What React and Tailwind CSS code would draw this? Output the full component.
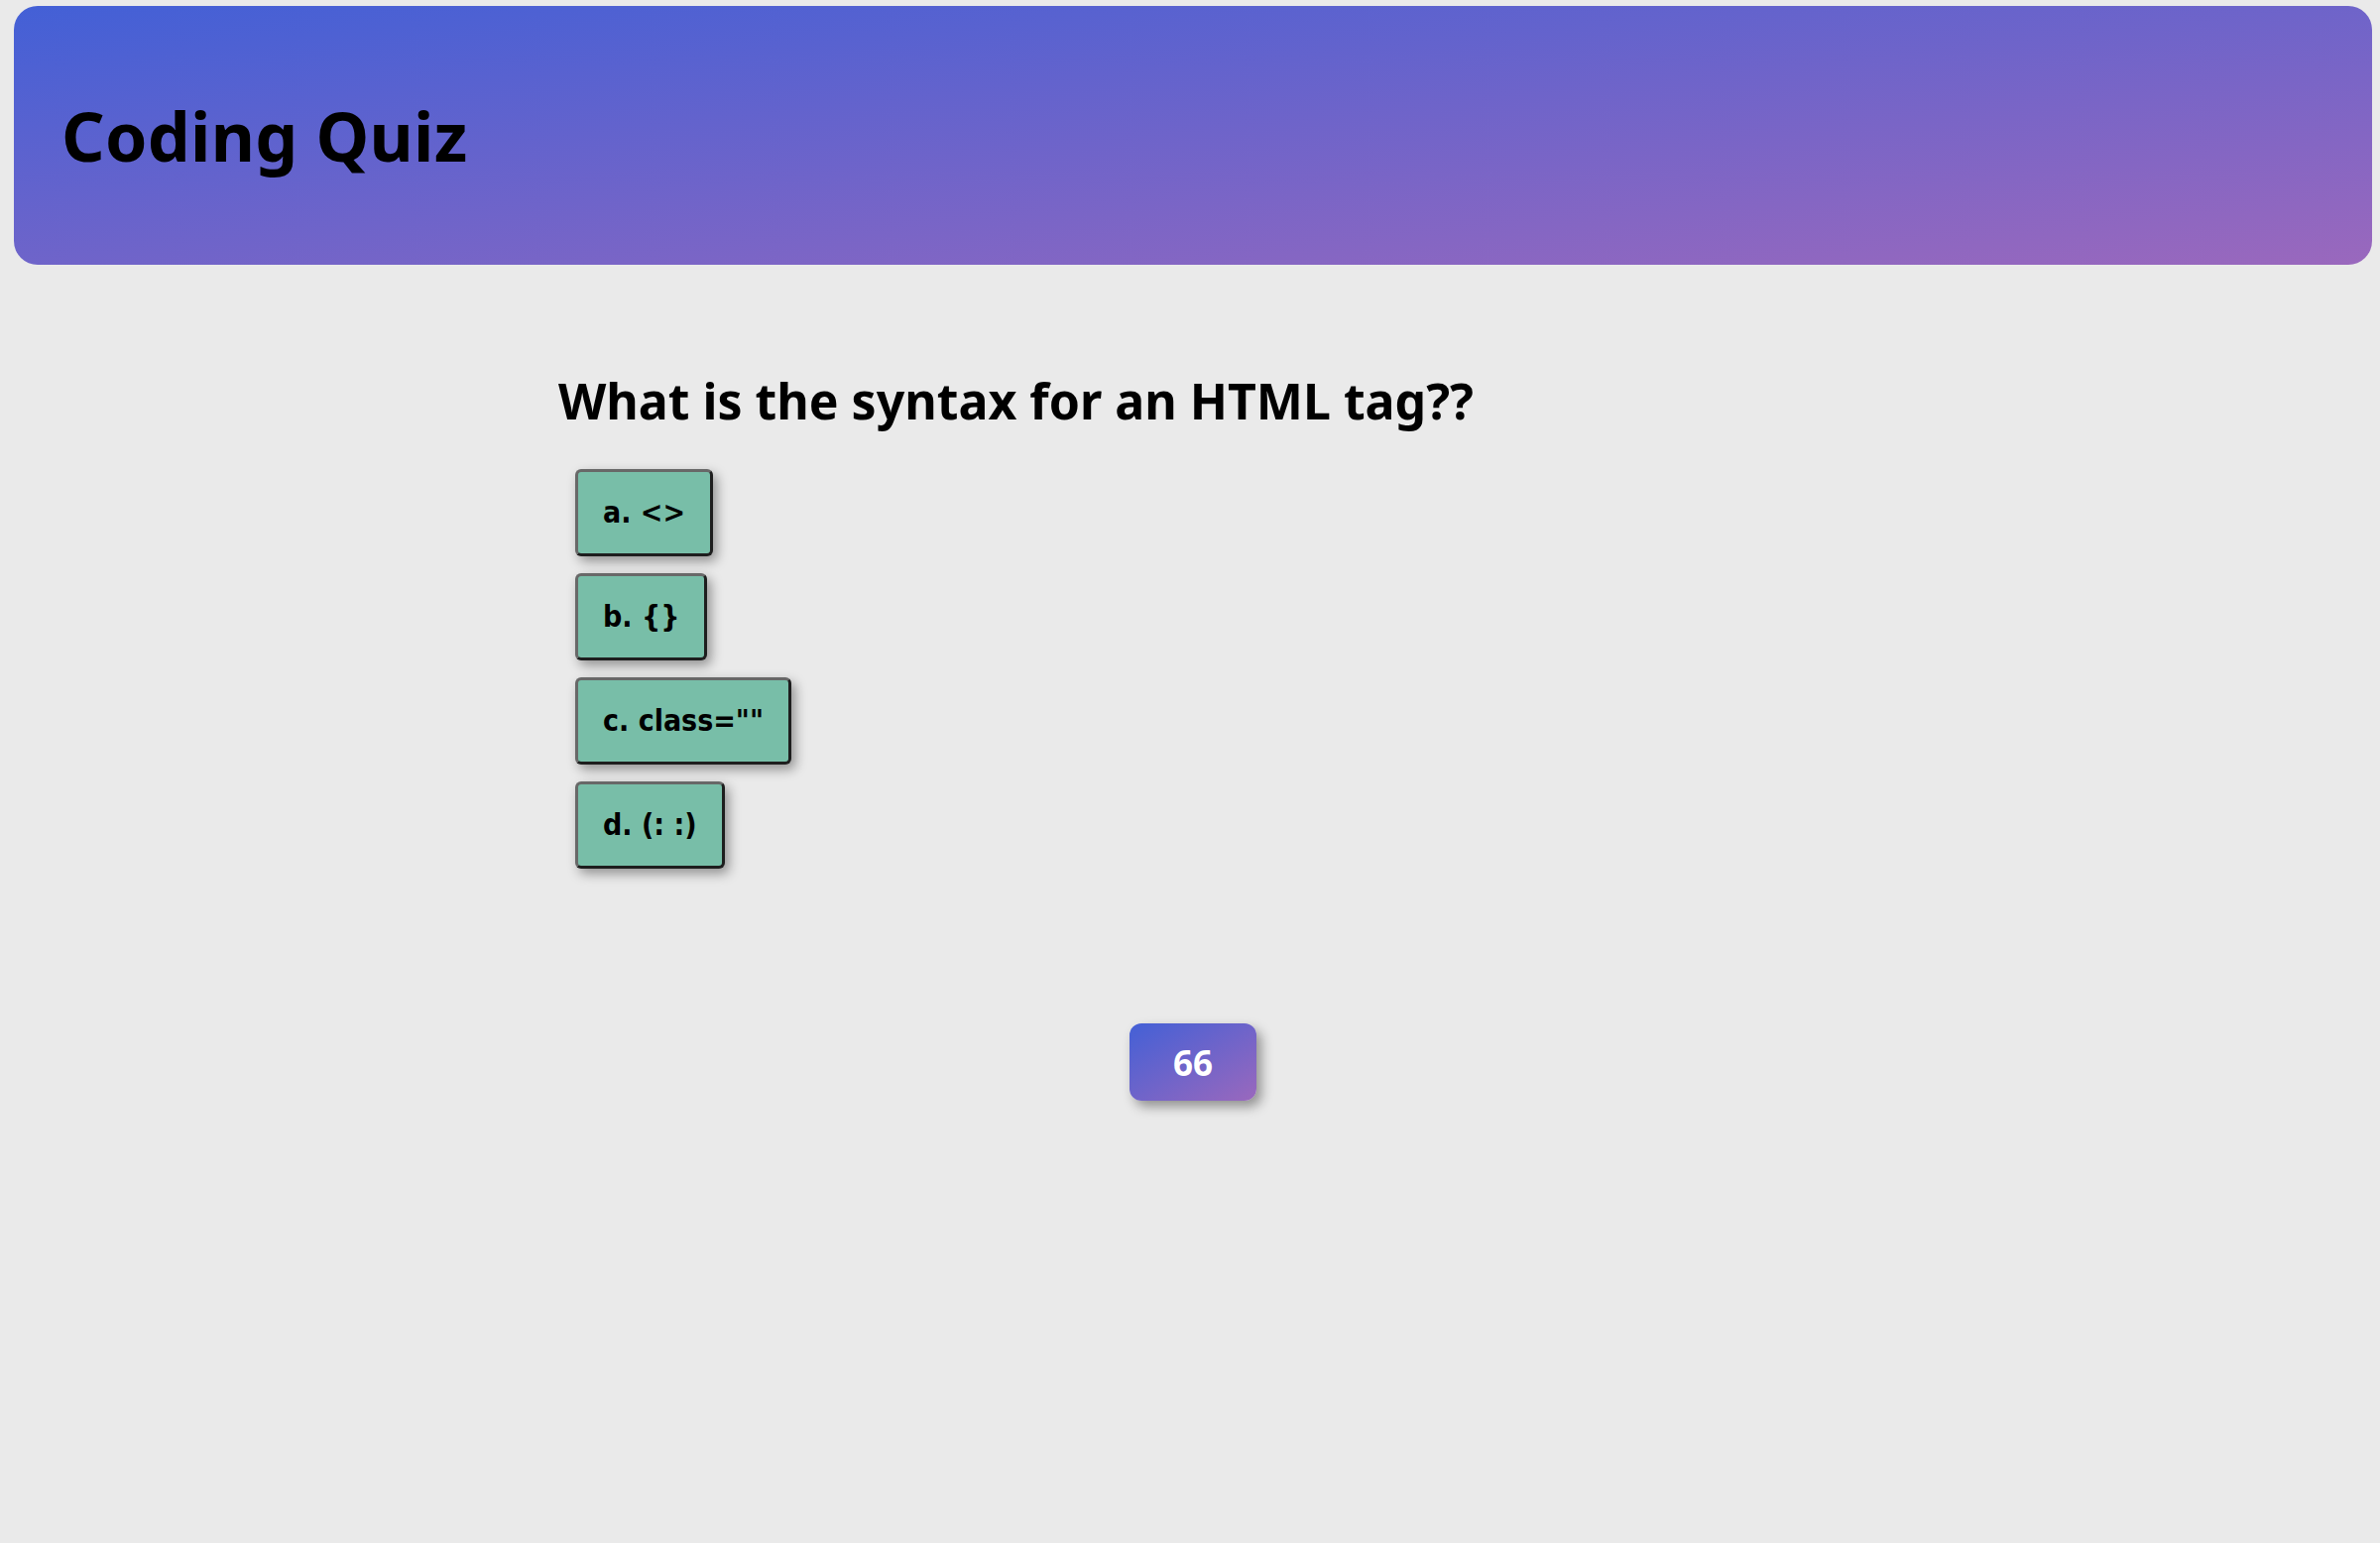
import { useState } from 'react';

const choices = ['a. <>', 'b. {}', 'c. class=""', 'd. (: :)'];

export default function App() {
  const [timeLeft] = useState(66);

  return (
    <div className="min-h-screen bg-[#eaeaea] pt-[6px] pb-10 font-['Noto_Sans',sans-serif] text-black">
      <header className="ml-[14px] mr-[8px] h-[261px] rounded-[24px] bg-[linear-gradient(to_bottom_right,#4360d6,#9a68bd)] flex items-center pl-[48px]">
        <h1 className="text-[68px] font-bold leading-none tracking-[0.3px]">Coding Quiz</h1>
      </header>

      <main className="w-[1274px] mx-auto mt-[103px]">
        <h2 className="text-[50px] font-bold leading-[68px]">What is the syntax for an HTML tag??</h2>
        <div className="mt-[35px] ml-[17px] flex flex-col items-start gap-[17px]">
          {choices.map(c => (
            <button
              key={c}
              className="font-['DejaVu_Sans_Condensed','DejaVu_Sans',sans-serif] font-bold text-[30px] leading-[36px] px-[25px] py-[23px] bg-[#78bea8] rounded-[6px] border-[3px] border-t-[#686868] border-l-[#686868] border-b-[#1e1e1e] border-r-[#1e1e1e] shadow-[4px_5px_12px_rgba(0,0,0,0.38)]"
            >
              {c}
            </button>
          ))}
        </div>
      </main>

      <div className="mt-[156px] flex justify-center pl-[6px]">
        <div className="w-[128px] h-[78px] rounded-[12px] bg-[linear-gradient(to_bottom_right,#4360d6,#9a68bd)] flex items-center justify-center shadow-[5px_6px_12px_rgba(0,0,0,0.38)]">
          <span className="text-white font-bold text-[35px] leading-none">{timeLeft}</span>
        </div>
      </div>
    </div>
  );
}
